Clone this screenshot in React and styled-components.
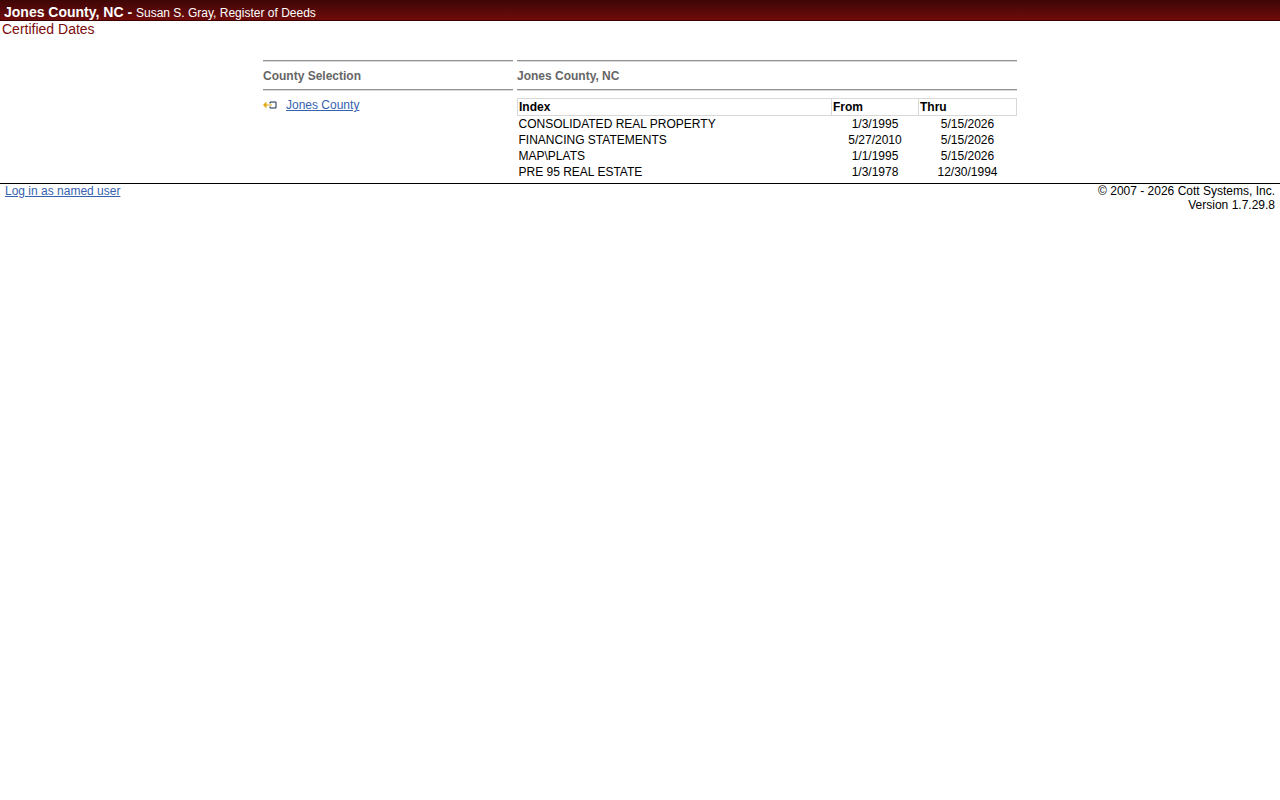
import React from "react";
import styled, { createGlobalStyle } from "styled-components";

const Global = createGlobalStyle`
  html, body { margin: 0; padding: 0; background: #fff; }
  body { font-family: "Liberation Sans", Arial, sans-serif; font-size: 12px; color: #000; }
`;
const Header = styled.header`
  box-sizing: border-box;
  height: 21px;
  padding: 3px 0 0 4px;
  background: linear-gradient(to bottom, #3e0606 0%, #700b0b 100%);
  border-bottom: 1px solid #3c0000;
  color: #fff;
  line-height: 18px;
  white-space: nowrap;
`;
const Title = styled.b`
  font-size: 14px;
`;
const Sub = styled.span`
  font-size: 12px;
`;
const PageName = styled.div`
  padding-left: 2px;
  font-size: 14px;
  line-height: 16px;
  color: #7b0c0c;
  height: 39px;
`;
const Main = styled.main`
  display: flex;
  gap: 4px;
  width: 754px;
  margin-left: 263px;
  height: 123px;
`;
const Left = styled.section`
  width: 250px;
`;
const Right = styled.section`
  width: 500px;
`;
const SectionHead = styled.h2`
  margin: 0 0 1px;
  height: 30px;
  box-sizing: border-box;
  border-top: 1px solid #949494;
  border-bottom: 1px solid #949494;
  box-shadow: inset 0 1px 0 #d8d8d8, 0 1px 0 #d8d8d8;
  font-size: 12px;
  font-weight: bold;
  color: #666;
  line-height: 31px;
`;
const CountyRow = styled.div`
  display: flex;
  align-items: center;
  height: 14px;
  margin-top: 8px;
  gap: 9px;
`;
const StyledLink = styled.a`
  color: #3563b0;
  text-decoration: underline;
  font-size: 12px;
  line-height: 14px;
`;
const Table = styled.table`
  margin-top: 8px;
  width: 499px;
  table-layout: fixed;
  border-collapse: collapse;
  font-size: 12px;
`;
const Th = styled.th`
  height: 17px;
  box-sizing: border-box;
  padding: 0 1px;
  border: 1px solid #d8d8d8;
  text-align: left;
  font-weight: bold;
  line-height: 14px;
`;
const Td = styled.td`
  height: 16px;
  padding: 0 ${(p) => (p.$center ? "2px" : "1px")};
  line-height: 14px;
  text-align: ${(p) => (p.$center ? "center" : "left")};
`;
const Footer = styled.footer`
  border-top: 1px solid #000;
  display: flex;
  justify-content: space-between;
  padding: 0 5px;
  line-height: 14px;
  font-size: 12px;
`;
const Copy = styled.div`
  text-align: right;
`;
const ArrowIcon = () => (
  <svg width="14" height="8" viewBox="0 0 14 8" fill="none">
    <path d="M3.5 0.5 L0 4 L3.5 7.5 Z" fill="#e3a70f" />
    <path d="M3 4 H9" stroke="#e3a70f" strokeWidth="1" />
    <path d="M7 2.5 V1 H13 V7 H7 V5.5" stroke="#16294a" strokeWidth="1" />
  </svg>
);
const rows = [
  ["CONSOLIDATED REAL PROPERTY", "1/3/1995", "5/15/2026"],
  ["FINANCING STATEMENTS", "5/27/2010", "5/15/2026"],
  ["MAP\\PLATS", "1/1/1995", "5/15/2026"],
  ["PRE 95 REAL ESTATE", "1/3/1978", "12/30/1994"],
];
export default function App() {
  return (
    <>
      <Global />
      <Header>
        <Title>Jones County, NC - </Title>
        <Sub>Susan S. Gray, Register of Deeds</Sub>
      </Header>
      <PageName>Certified Dates</PageName>
      <Main>
        <Left>
          <SectionHead>County Selection</SectionHead>
          <CountyRow>
            <ArrowIcon />
            <StyledLink href="#">Jones County</StyledLink>
          </CountyRow>
        </Left>
        <Right>
          <SectionHead>Jones County, NC</SectionHead>
          <Table>
            <colgroup>
              <col style={{ width: 314 }} />
              <col style={{ width: 87 }} />
              <col style={{ width: 98 }} />
            </colgroup>
            <thead>
              <tr>
                <Th>Index</Th>
                <Th>From</Th>
                <Th>Thru</Th>
              </tr>
            </thead>
            <tbody>
              {rows.map((r) => (
                <tr key={r[0]}>
                  <Td>{r[0]}</Td>
                  <Td $center>{r[1]}</Td>
                  <Td $center>{r[2]}</Td>
                </tr>
              ))}
            </tbody>
          </Table>
        </Right>
      </Main>
      <Footer>
        <StyledLink href="#">Log in as named user</StyledLink>
        <Copy>
          © 2007 - 2026 Cott Systems, Inc.
          <br />
          Version 1.7.29.8
        </Copy>
      </Footer>
    </>
  );
}
